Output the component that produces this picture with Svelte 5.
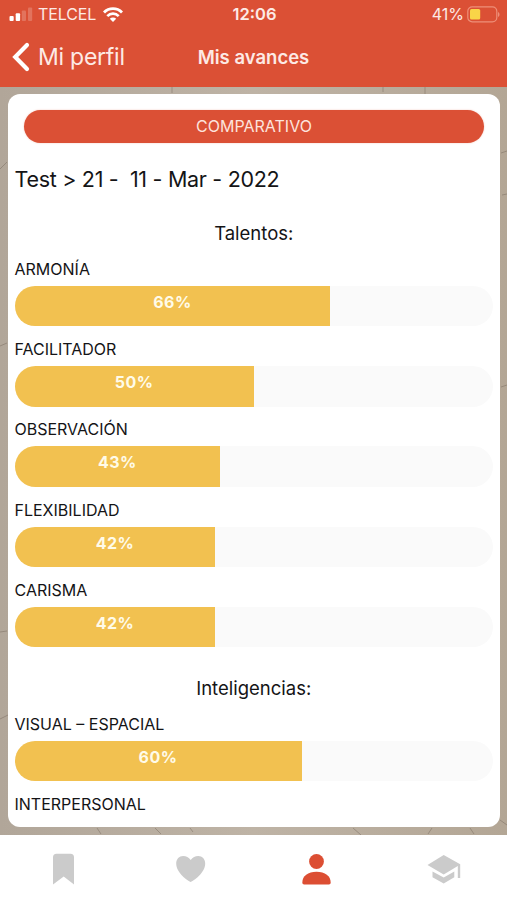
<script>
	const sections = [
		{
			title: 'Talentos:',
			items: [
				{ label: 'ARMONÍA', value: 66 },
				{ label: 'FACILITADOR', value: 50 },
				{ label: 'OBSERVACIÓN', value: 43 },
				{ label: 'FLEXIBILIDAD', value: 42 },
				{ label: 'CARISMA', value: 42 }
			]
		},
		{
			title: 'Inteligencias:',
			items: [
				{ label: 'VISUAL – ESPACIAL', value: 60 },
				{ label: 'INTERPERSONAL' }
			]
		}
	];
</script>

<div class="screen">
	<header>
		<div class="status">
			<div class="carrier">
				<svg width="24" height="14" viewBox="0 0 24 14" fill="#fff">
					<rect x="0.5" y="9" width="4.2" height="5" rx="1" />
					<rect x="6.7" y="6.3" width="4.4" height="7.7" rx="1" />
					<rect x="12.8" y="3.4" width="4.2" height="10.6" rx="1" opacity="0.2" />
					<rect x="19" y="0.5" width="4.2" height="13.5" rx="1" opacity="0.2" />
				</svg>
				<span>TELCEL</span>
				<svg class="wifi" width="20" height="15" viewBox="0 0 20 15" fill="none" stroke="#fff">
					<path d="M1 5.4a12.6 12.6 0 0 1 18 0" stroke-width="2.8" />
					<path d="M4.3 9.1a8 8 0 0 1 11.4 0" stroke-width="2.7" />
					<path d="M10 15 6.8 11.8a4.5 4.5 0 0 1 6.4 0z" fill="#fff" stroke="none" />
				</svg>
			</div>
			<div class="time">12:06</div>
			<div class="power">
				<span>41%</span>
				<svg width="33" height="17" viewBox="0 0 33 17">
					<rect x="0.8" y="0.8" width="29" height="15" rx="4.4" fill="none" stroke="#ee8f79" stroke-width="1.2" />
					<rect x="3" y="3" width="10.2" height="10.6" rx="1.5" fill="#f9d548" />
					<path d="M31 6v5c2-.8 2-4.2 0-5z" fill="#ee8f79" />
				</svg>
			</div>
		</div>
		<nav class="bar">
			<div class="back">
				<svg width="18" height="30" viewBox="0 0 18 30" fill="none" stroke="#fff" stroke-width="4.2">
					<path d="M15 3 3.2 15 15 27" stroke-linecap="round" />
				</svg>
				<span>Mi perfil</span>
			</div>
			<div class="title">Mis avances</div>
		</nav>
	</header>

	<main>
		<svg class="texture" viewBox="0 0 507 748" fill="none" stroke="#77695c" stroke-width="0.8">
			<path d="M0 82 7 75M0 259l7-3M0 545l7-1M0 632l8-4M501 66l6-2M502 108l5-1M501 300l6-2" opacity="0.6" />
			<path d="M172 0v6M383 0v5M425 0v7M97 741l4 6M155 741l6 6M190 741l3 4M353 741l8 7M428 747l4-6M470 741l4 6M500 733l7 5" opacity="0.6" />
		</svg>
		<div class="card">
			<div class="pill">COMPARATIVO</div>
			<h2>Test &gt; 21 -&nbsp; 11 - Mar - 2022</h2>
			{#each sections as section}
				<section>
					<h3>{section.title}</h3>
					{#each section.items as item}
						<div class="label">{item.label}</div>
						{#if item.value}
							<div class="track">
								<div class="fill" style="width: {item.value}%">{item.value}%</div>
							</div>
						{/if}
					{/each}
				</section>
			{/each}
		</div>
	</main>

	<footer>
		<div class="tab">
			<svg width="36" height="36" viewBox="0 0 36 36" fill="#cbcbcb">
				<path d="M11.5 2.8h14a3.5 3.5 0 0 1 3.500 3.500V33.500L18.700 25.500 8 33.500V6.300a3.500 3.500 0 0 1 3.500-3.500z" />
			</svg>
		</div>
		<div class="tab">
			<svg width="36" height="36" viewBox="0 0 36 36" fill="#cbcbcb">
				<path d="M18.700 31C16.200 30 4.200 22 4.200 12.500 4.200 8 7.200 5 11.100 5c3.200 0 5.600 1.500 7.600 4 2-2.500 4.400-4 7.600-4 3.900 0 6.900 3 6.900 7.500C33.200 22 21.200 30 18.700 31z" />
			</svg>
		</div>
		<div class="tab">
			<svg width="36" height="36" viewBox="0 0 36 36" fill="#dc4e33">
				<circle cx="17.500" cy="10.500" r="7.400" />
				<path d="M3.300 31.500C3.300 25 9 20.700 17.500 20.700s14.200 4.300 14.200 10.800c0 1.200-.7 2-1.800 2H5.100c-1.100 0-1.800-.8-1.800-2z" />
			</svg>
		</div>
		<div class="tab">
			<svg width="36" height="36" viewBox="0 0 36 36" fill="#cbcbcb">
				<path d="M1.500 14 17.700 4 34.200 13.200V27h-2.400V15L17.700 23.500z" />
				<path d="M6.500 20.500 17.700 26.500 28.300 20.500v5.800L17.700 32.500 6.500 26.300z" />
			</svg>
		</div>
	</footer>
</div>

<style>
	:global(body) {
		margin: 0;
	}
	.screen {
		display: flex;
		flex-direction: column;
		width: 507px;
		height: 900px;
		overflow: hidden;
		background: #fff;
		color: #141416;
		font-family: Inter, sans-serif;
	}

	header {
		flex: none;
		height: 87px;
		background: #db5035;
		color: #fdeae5;
	}
	.status {
		display: grid;
		grid-template-columns: 1fr auto 1fr;
		align-items: center;
		height: 28px;
		padding: 0 7px 0 9px;
		font-size: 16px;
	}
	.carrier,
	.power {
		display: flex;
		align-items: center;
	}
	.carrier span {
		margin-left: 5px;
		letter-spacing: -0.1px;
	}
	.wifi {
		margin-left: 7px;
	}
	.time {
		font-weight: 600;
		font-size: 16.5px;
	}
	.power {
		justify-content: flex-end;
		gap: 3px;
	}

	.bar {
		display: grid;
		grid-template-columns: 1fr auto 1fr;
		align-items: center;
		height: 58px;
	}
	.back {
		display: flex;
		align-items: center;
		gap: 8px;
		padding-left: 12px;
		font-size: 23px;
		letter-spacing: -0.25px;
	}
	.title {
		font-size: 18.5px;
		font-weight: 600;
	}

	main {
		display: grid;
		height: 748px;
		background: linear-gradient(90deg, #b1a699, #beb3a5 50%, #b3a695);
	}
	.texture {
		grid-area: 1 / 1;
		width: 507px;
		height: 748px;
	}
	.card {
		grid-area: 1 / 1;
		z-index: 1;
		box-sizing: border-box;
		height: 733px;
		margin: 7px 7px 0 8px;
		padding: 16px 7px 0 6.5px;
		border-radius: 12px;
		background: #fff;
	}
	.pill {
		height: 33px;
		margin: 0 9px 0 9.5px;
		border-radius: 17px;
		background: #db5035;
		box-shadow: 0 0 2px #f3c4ba;
		color: #fde3dc;
		font-size: 16px;
		line-height: 33px;
		text-align: center;
	}
	h2 {
		height: 73px;
		margin: 0;
		font-size: 21.5px;
		font-weight: 400;
		letter-spacing: -0.3px;
		line-height: 73px;
		white-space: nowrap;
	}
	h3 {
		height: 41px;
		margin: 0;
		font-size: 18.5px;
		font-weight: 400;
		line-height: 35px;
		text-align: center;
	}
	section + section h3 {
		height: 54px;
		line-height: 60px;
	}
	.label {
		height: 29px;
		font-size: 16px;
		line-height: 25.5px;
	}
	.track {
		height: 40.4px;
		margin-bottom: 10.8px;
		border-radius: 21px;
		background: #fafafa;
		overflow: hidden;
	}
	.fill {
		height: 100%;
		background: #f2c150;
		color: #fffbe9;
		font-size: 16px;
		font-weight: 700;
		letter-spacing: 0.5px;
		line-height: 33.5px;
		text-align: center;
	}

	footer {
		display: grid;
		grid-template-columns: repeat(4, 1fr);
		flex: 1;
	}
	.tab {
		display: flex;
		justify-content: center;
		padding-top: 16px;
	}
</style>
